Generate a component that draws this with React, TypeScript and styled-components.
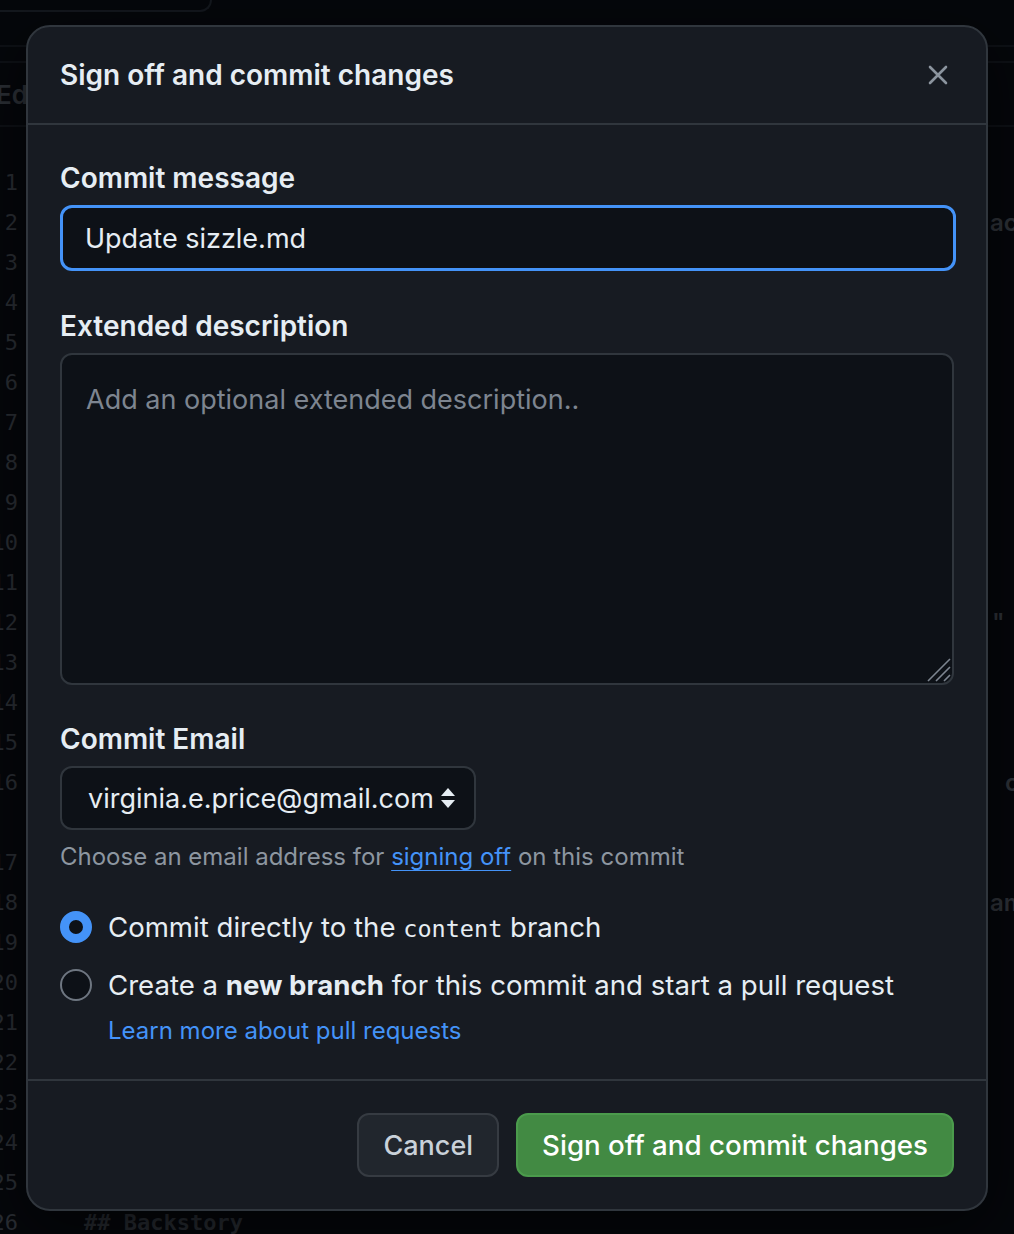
import React from 'react';
import styled, { createGlobalStyle } from 'styled-components';

const GlobalStyle = createGlobalStyle`
  html, body {
    margin: 0;
    padding: 0;
    background: #05070b;
    overflow: hidden;
  }
  body {
    font-family: Inter, "Liberation Sans", sans-serif;
  }
  * {
    box-sizing: border-box;
  }
`;

const Page = styled.div`
  position: relative;
  width: 1014px;
  height: 1234px;
  overflow: hidden;
  background: #05070b;
`;

// ---- dimmed editor behind the dialog ----

const TopBar = styled.div`
  height: 47px;
  border-bottom: 2px solid #0e1116;
`;

const TopBox = styled.div`
  width: 212px;
  height: 12px;
  border: 2px solid #14181e;
  border-top: none;
  border-left: none;
  border-bottom-right-radius: 12px;
`;

const TabRow = styled.div`
  height: 66px;
  margin-top: 14px;
  margin-left: -4px;
  border-top: 2px solid #0e1116;
  border-bottom: 2px solid #0e1116;
  display: flex;
  align-items: center;
  font-size: 26px;
  font-weight: 600;
  color: #2b2f35;
`;

const Code = styled.div`
  padding-top: 35px;
  display: flex;
  flex-direction: column;
`;

const CodeLine = styled.div`
  height: 40px;
  display: flex;
  align-items: center;
  font-family: "DejaVu Sans Mono", "Liberation Mono", monospace;
  font-size: 22px;
  color: #2a2e34;
`;

const Gutter = styled.span`
  width: 18px;
  flex: 0 0 18px;
  text-align: right;
  direction: rtl;
  white-space: nowrap;
`;

const CodeText = styled.span`
  margin-left: 66px;
  font-weight: 700;
  color: #262a30;
`;

const CodeEnd = styled.span<{ $w: number }>`
  margin-left: auto;
  white-space: nowrap;
  width: ${(p) => p.$w}px;
  font-family: Inter, "Liberation Sans", sans-serif;
  font-size: 24px;
  font-weight: 600;
  color: #2e3238;
`;

// ---- dialog ----

const Dialog = styled.div`
  position: absolute;
  top: 25px;
  left: 26px;
  width: 962px;
  height: 1186px;
  background: #171b22;
  border: 2px solid #30363d;
  border-radius: 24px;
  box-shadow: 0 16px 64px rgba(0, 0, 0, 0.6);
  display: flex;
  flex-direction: column;
  overflow: hidden;
`;

const Header = styled.div`
  height: 98px;
  flex: 0 0 auto;
  display: flex;
  align-items: center;
  justify-content: space-between;
  padding: 0 28px 0 32px;
  border-bottom: 2px solid #30363d;
`;

const Title = styled.h1`
  margin: 0;
  font-size: 28px;
  font-weight: 600;
  color: #e6edf3;
`;

const CloseButton = styled.button`
  width: 40px;
  height: 40px;
  background: none;
  border: none;
  padding: 0;
  display: flex;
  align-items: center;
  justify-content: center;
  color: #8b949e;
`;

const Body = styled.div`
  flex: 1;
  padding: 36px 32px 0 32px;
  display: flex;
  flex-direction: column;
`;

const Label = styled.label`
  display: block;
  font-size: 28px;
  font-weight: 600;
  color: #e6edf3;
  line-height: 34px;
  margin-bottom: 10px;
`;

const Field = styled.div<{ $gap?: number }>`
  margin-bottom: ${(p) => p.$gap ?? 0}px;
`;

const TextInput = styled.input`
  width: 896px;
  height: 66px;
  background: #0d1117;
  border: 3px solid #4493f8;
  border-radius: 12px;
  padding: 0 22px;
  font-family: Inter, "Liberation Sans", sans-serif;
  font-size: 27px;
  color: #e6edf3;
  outline: none;
`;

const AreaWrap = styled.div`
  position: relative;
  width: 894px;
  height: 332px;
`;

const TextArea = styled.textarea`
  width: 100%;
  height: 100%;
  background: #0d1117;
  border: 2px solid #30363d;
  border-radius: 12px;
  padding: 28px 24px;
  font-family: Inter, "Liberation Sans", sans-serif;
  font-size: 27px;
  color: #e6edf3;
  resize: none;
  outline: none;
  &::placeholder {
    color: #7d8590;
  }
`;

const Grip = styled.svg`
  position: absolute;
  right: 3px;
  bottom: 3px;
`;

const Select = styled.div`
  width: 416px;
  height: 64px;
  background: #0d1117;
  border: 2px solid #30363d;
  border-radius: 12px;
  display: flex;
  align-items: center;
  justify-content: space-between;
  padding: 0 18px 0 26px;
  font-size: 27px;
  color: #e6edf3;
`;

const Hint = styled.p`
  margin: 11px 0 0 0;
  font-size: 24px;
  color: #8d96a0;
  line-height: 32px;
`;

const Link = styled.a<{ $underline?: boolean }>`
  color: #4493f8;
  text-decoration: ${(p) => (p.$underline ? 'underline' : 'none')};
  text-underline-offset: 5px;
  text-decoration-thickness: 1px;
`;

const RadioGroup = styled.div`
  margin-top: 36px;
  display: flex;
  flex-direction: column;
  gap: 20px;
`;

const RadioRow = styled.div`
  display: flex;
  align-items: flex-start;
  gap: 16px;
`;

const Radio = styled.span<{ $checked?: boolean }>`
  width: 32px;
  height: 32px;
  flex: 0 0 32px;
  border-radius: 50%;
  margin-top: 2px;
  background: #0d1117;
  border: ${(p) => (p.$checked ? '9px solid #4493f8' : '2px solid #6e7681')};
`;

const RadioText = styled.div`
  display: flex;
  flex-direction: column;
  gap: 13px;
`;

const RadioLabel = styled.span`
  font-size: 27.6px;
  line-height: 36px;
  color: #e6edf3;
`;

const Mono = styled.code`
  font-family: "DejaVu Sans Mono", "Liberation Mono", monospace;
  font-size: 23.5px;
`;

const SmallLink = styled(Link)`
  font-size: 24px;
  line-height: 30px;
`;

const Footer = styled.div`
  flex: 0 0 auto;
  border-top: 2px solid #30363d;
  padding: 32px;
  display: flex;
  justify-content: flex-end;
  gap: 17px;
`;

const Button = styled.button<{ $primary?: boolean }>`
  height: 64px;
  padding: 0 ${(p) => (p.$primary ? 24 : 24)}px;
  border-radius: 12px;
  font-family: Inter, "Liberation Sans", sans-serif;
  font-size: ${(p) => (p.$primary ? 27.7 : 27)}px;
  font-weight: 500;
  color: ${(p) => (p.$primary ? '#ffffff' : '#c9d1d9')};
  background: ${(p) => (p.$primary ? '#428a43' : '#21262d')};
  border: 2px solid ${(p) => (p.$primary ? '#4b9b4c' : '#363b42')};
`;

const lineNumbers = [
  '1', '2', '3', '4', '5', '6', '7', '8', '9', '10', '11', '12', '13', '14', '15', '16',
  '', '17', '18', '19', '20', '21', '22', '23', '24', '25', '26',
];

const rightEnds: Record<number, [string, number]> = {
  1: ['ac', 24],
  11: ['"', 22],
  15: ['c', 9],
  18: ['am', 24],
};

export default function App() {
  return (
    <Page>
      <GlobalStyle />
      <TopBar>
        <TopBox />
      </TopBar>
      <TabRow>Edit</TabRow>
      <Code>
        {lineNumbers.map((n, i) => (
          <CodeLine key={i}>
            <Gutter>{n}</Gutter>
            {i === 26 && <CodeText>## Backstory</CodeText>}
            {rightEnds[i] && <CodeEnd $w={rightEnds[i][1]}>{rightEnds[i][0]}</CodeEnd>}
          </CodeLine>
        ))}
      </Code>

      <Dialog>
        <Header>
          <Title>Sign off and commit changes</Title>
          <CloseButton aria-label="Close">
            <svg width="20" height="20" viewBox="0 0 20 20">
              <path d="M2 2 L18 18 M18 2 L2 18" stroke="currentColor" strokeWidth="2.6" strokeLinecap="round" />
            </svg>
          </CloseButton>
        </Header>

        <Body>
          <Field $gap={38}>
            <Label>Commit message</Label>
            <TextInput readOnly value="Update sizzle.md" />
          </Field>

          <Field $gap={37}>
            <Label>Extended description</Label>
            <AreaWrap>
              <TextArea placeholder="Add an optional extended description.." />
              <Grip width="26" height="26" viewBox="0 0 26 26">
                <path d="M25 3 L3 25 M25 11 L11 25 M25 19 L19 25" stroke="#7d8590" strokeWidth="1.6" />
              </Grip>
            </AreaWrap>
          </Field>

          <Field>
            <Label>Commit Email</Label>
            <Select>
              <span>virginia.e.price@gmail.com</span>
              <svg width="16" height="22" viewBox="0 0 16 22">
                <path d="M8 1 L15 9 H1 Z M1 13 H15 L8 21 Z" fill="#e6edf3" />
              </svg>
            </Select>
            <Hint>
              Choose an email address for <Link $underline href="#">signing off</Link> on this commit
            </Hint>
          </Field>

          <RadioGroup>
            <RadioRow>
              <Radio $checked />
              <RadioText>
                <RadioLabel>
                  Commit directly to the <Mono>content</Mono> branch
                </RadioLabel>
              </RadioText>
            </RadioRow>
            <RadioRow>
              <Radio />
              <RadioText>
                <RadioLabel>
                  Create a <strong>new branch</strong> for this commit and start a pull request
                </RadioLabel>
                <SmallLink href="#">Learn more about pull requests</SmallLink>
              </RadioText>
            </RadioRow>
          </RadioGroup>
        </Body>

        <Footer>
          <Button>Cancel</Button>
          <Button $primary>Sign off and commit changes</Button>
        </Footer>
      </Dialog>
    </Page>
  );
}
